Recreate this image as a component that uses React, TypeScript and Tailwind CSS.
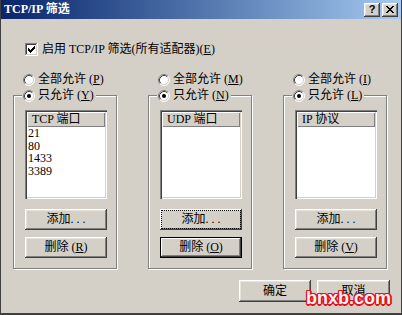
import React from "react";

const RAISED =
  "shadow-[inset_-1px_-1px_0_#404040,inset_1px_1px_0_#ffffff,inset_-2px_-2px_0_#808080,inset_2px_2px_0_#e6e3dd]";
const RAISED_DEF =
  "shadow-[inset_-1px_-1px_0_#404040,inset_1px_1px_0_#ffffff,inset_-2px_-2px_0_#808080]";

function Radio({ checked = false }: { checked?: boolean }) {
  return (
    <svg width="12" height="12" viewBox="0 0 12 12" className="shrink-0">
      <circle cx="6" cy="6" r="5" fill="#ffffff" />
      <path d="M2.11 9.89 A5.5 5.5 0 0 1 9.89 2.11" fill="none" stroke="#808080" strokeWidth="1" />
      <path d="M2.82 9.18 A4.5 4.5 0 0 1 9.18 2.82" fill="none" stroke="#404040" strokeWidth="1" />
      <path d="M9.89 2.11 A5.5 5.5 0 0 1 2.11 9.89" fill="none" stroke="#ffffff" strokeWidth="1" />
      <path d="M9.18 2.82 A4.5 4.5 0 0 1 2.82 9.18" fill="none" stroke="#d4d0c8" strokeWidth="1" />
      {checked && <circle cx="6" cy="6" r="2" fill="#000000" />}
    </svg>
  );
}

function CheckBox() {
  const cols = [2, 3, 4, 3, 2, 1, 0];
  return (
    <svg width="13" height="13" viewBox="0 0 13 13" className="shrink-0" shapeRendering="crispEdges">
      <rect x="0" y="0" width="13" height="13" fill="#ffffff" />
      <rect x="0" y="0" width="12" height="1" fill="#808080" />
      <rect x="0" y="0" width="1" height="12" fill="#808080" />
      <rect x="1" y="1" width="10" height="1" fill="#404040" />
      <rect x="1" y="1" width="1" height="10" fill="#404040" />
      <rect x="1" y="11" width="11" height="1" fill="#d4d0c8" />
      <rect x="11" y="1" width="1" height="11" fill="#d4d0c8" />
      {cols.map((s, i) => (
        <rect key={i} x={3 + i} y={3 + s} width="1" height="3" fill="#000000" />
      ))}
    </svg>
  );
}

function Btn({
  children,
  className = "",
  def = false,
  focus = false,
}: {
  children: React.ReactNode;
  className?: string;
  def?: boolean;
  focus?: boolean;
}) {
  return (
    <div
      className={`relative flex items-center justify-center bg-[#d4d0c8] ${
        def ? "border border-black " + RAISED_DEF : RAISED
      } ${className}`}
    >
      {focus && <div className="absolute inset-[1px] border border-dotted border-black" />}
      <span className="leading-[13px] whitespace-nowrap">{children}</span>
    </div>
  );
}

function Acc({ k }: { k: string }) {
  return (
    <>
      (<span className="underline underline-offset-[1px]">{k}</span>)
    </>
  );
}

function Group({
  allKey,
  onlyKey,
  header,
  items,
  delKey,
  focusAdd = false,
  defDel = false,
}: {
  allKey: string;
  onlyKey: string;
  header: string;
  items: string[];
  delKey: string;
  focusAdd?: boolean;
  defDel?: boolean;
}) {
  return (
    <div className="w-[105px] flex flex-col">
      <div className="flex items-center h-[13px] pl-[10px] gap-[3px]">
        <Radio />
        <span className="leading-[13px] whitespace-nowrap">
          全部允许 <Acc k={allKey} />
        </span>
      </div>
      <div className="relative mt-[9px] w-[104px] border border-[#808080] shadow-[inset_1px_1px_0_#ffffff,1px_1px_0_#ffffff] pt-[14px] pb-[10px] pl-[11px] flex flex-col">
        <div className="absolute left-[8px] top-[-7px] flex items-center h-[13px] gap-[3px] bg-[#d4d0c8] pl-[1px] pr-[2px]">
          <Radio checked />
          <span className="leading-[13px] whitespace-nowrap">
            只允许 <Acc k={onlyKey} />
          </span>
        </div>
        <div className="w-[82px] h-[89px] bg-white p-[2px] shadow-[inset_1px_1px_0_#808080,inset_2px_2px_0_#404040,inset_-1px_-1px_0_#ffffff,inset_-2px_-2px_0_#d4d0c8] flex flex-col">
          <div className="h-[15px] flex items-center pl-[5px] bg-[#d4d0c8] shadow-[inset_1px_1px_0_#ffffff,inset_-1px_-1px_0_#808080] leading-[13px] whitespace-nowrap">
            {header}
          </div>
          <div className="flex flex-col pl-[1px]">
            {items.map((it) => (
              <div key={it} className="leading-[12.7px]">
                {it}
              </div>
            ))}
          </div>
        </div>
        <Btn className="mt-[10px] w-[82px] h-[21px]" focus={focusAdd}>
          添加. . .
        </Btn>
        <Btn className="mt-[7px] w-[82px] h-[21px]" def={defDel}>
          删除 <Acc k={delKey} />
        </Btn>
      </div>
    </div>
  );
}

export default function App() {
  return (
    <div className="relative w-[402px] h-[315px] bg-[#d4d0c8] border-l border-r border-b-2 border-[#404040] flex flex-col text-[12px] text-black font-['Liberation_Serif','Noto_Sans_CJK_SC',serif] overflow-hidden">
      {/* Title bar */}
      <div className="h-[19px] flex items-center bg-gradient-to-r from-[#0a246a] to-[#a6caf0] pl-[3px] pr-[3px]">
        <span className="text-white font-bold leading-[13px] text-[12px] whitespace-nowrap">TCP/IP 筛选</span>
        <div className="ml-auto flex gap-[2px]">
          <div className={`w-[16px] h-[14px] bg-[#d4d0c8] ${RAISED} flex items-center justify-center`}>
            <span className="font-['Liberation_Sans',sans-serif] font-bold text-[11px] leading-[11px] text-black">?</span>
          </div>
          <div className={`w-[16px] h-[14px] bg-[#d4d0c8] ${RAISED} flex items-center justify-center`}>
            <svg width="8" height="7" viewBox="0 0 8 7" shapeRendering="crispEdges">
              <path d="M0 0h2v1h-2z M6 0h2v1h-2z M1 1h2v1h-2z M5 1h2v1h-2z M2 2h4v1h-4z M3 3h2v1h-2z M2 4h4v1h-4z M1 5h2v1h-2z M5 5h2v1h-2z M0 6h2v1h-2z M6 6h2v1h-2z" fill="#000000" />
            </svg>
          </div>
        </div>
      </div>

      {/* Enable checkbox */}
      <div className="mt-[24px] flex items-center h-[13px] pl-[24px] gap-[4px]">
        <CheckBox />
        <span className="leading-[13px] whitespace-nowrap">
          启用 TCP/IP 筛选(所有适配器)<Acc k="E" />
        </span>
      </div>

      {/* Groups */}
      <div className="mt-[17px] flex pl-[12px] gap-[30px]">
        <Group allKey="P" onlyKey="Y" header="TCP 端口" items={["21", "80", "1433", "3389"]} delKey="R" />
        <Group allKey="M" onlyKey="N" header="UDP 端口" items={[]} delKey="O" focusAdd defDel />
        <Group allKey="I" onlyKey="L" header="IP 协议" items={[]} delKey="V" />
      </div>

      {/* OK / Cancel */}
      <div className="mt-[11px] flex justify-end gap-[6px] pr-[11px]">
        <Btn className="w-[72px] h-[22px]">确定</Btn>
        <Btn className="w-[73px] h-[22px]">取消</Btn>
      </div>

      {/* Watermark */}
      <div className="absolute left-[305px] top-[289px] font-['Liberation_Sans',sans-serif] font-bold text-[18px] leading-[18px] text-[#fff4f4] [text-shadow:1px_0_#e3121c,-1px_0_#e3121c,0_1px_#e3121c,0_-1px_#e3121c,1px_1px_#e3121c,-1px_-1px_#e3121c,1px_-1px_#e3121c,-1px_1px_#e3121c,2px_0_#e3121c,0_2px_#e3121c]">
        bnxb.com
      </div>
    </div>
  );
}
